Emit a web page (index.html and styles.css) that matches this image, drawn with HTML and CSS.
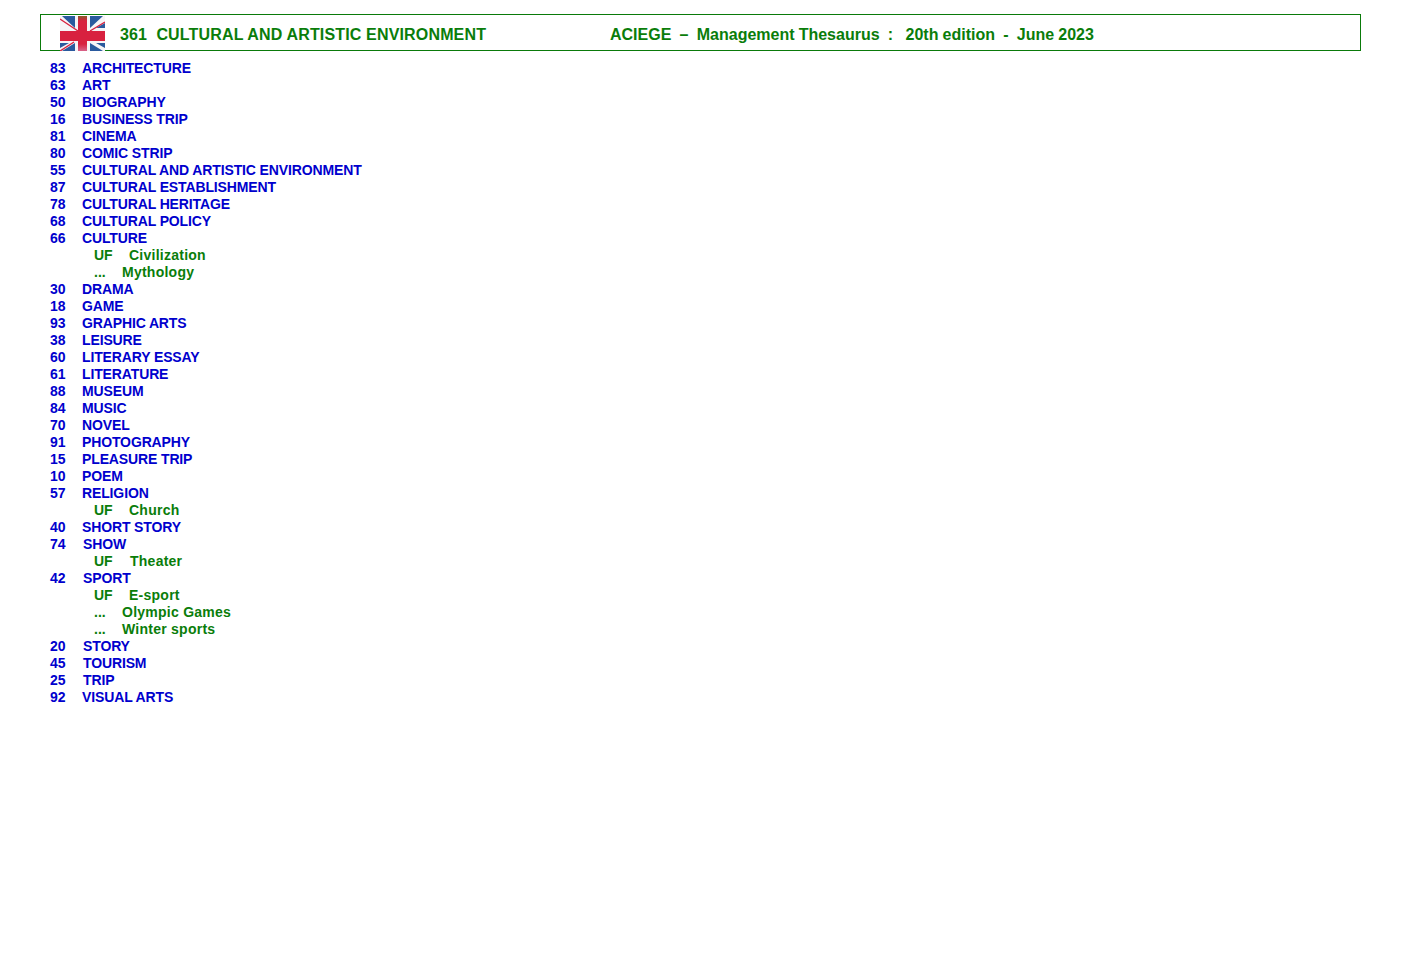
FILE: index.html
```html
<!DOCTYPE html>
<html lang="en">
<head>
<meta charset="utf-8">
<title>361 Cultural and artistic environment</title>
<link rel="stylesheet" href="styles.css">
</head>
<body>
<header class="banner">
  <svg class="flag" viewBox="0 0 45 36" width="45" height="36" aria-hidden="true">
    <defs>
      <linearGradient id="gloss" x1="0" y1="0" x2="0" y2="1">
        <stop offset="0" stop-color="#8a5a2a"/>
        <stop offset="0.14" stop-color="#d8213f"/>
        <stop offset="0.8" stop-color="#d8213f"/>
        <stop offset="1" stop-color="#d8648a"/>
      </linearGradient>
    </defs>
    <rect width="45" height="35" y="1" fill="#f6f4f6"/>
    <path d="M15 13V1H2ZM30 13V1H43ZM36 13H45V8ZM15 28V36H2ZM9 28H0V33ZM30 28V36H43ZM36 28H45V33Z" fill="#2a5a9e"/>
    <path d="M0 4 18 16M0 36 14 27M45 7 30 16" stroke="#d8213f" stroke-width="1.400"/>
    <rect x="18" y="1" width="9" height="35" fill="url(#gloss)"/>
    <rect y="16" width="45" height="10" fill="#d8213f"/>
  </svg>
  <span class="title">361&nbsp; CULTURAL AND ARTISTIC ENVIRONMENT</span>
  <span class="edition">ACIEGE &nbsp;–&nbsp; Management Thesaurus &nbsp;:&nbsp;&nbsp; 20th edition &nbsp;-&nbsp; June 2023</span>
</header>
<main class="list">
  <div class="term"><span class="num">83</span><span>ARCHITECTURE</span></div>
  <div class="term"><span class="num">63</span><span>ART</span></div>
  <div class="term"><span class="num">50</span><span>BIOGRAPHY</span></div>
  <div class="term"><span class="num">16</span><span>BUSINESS TRIP</span></div>
  <div class="term"><span class="num">81</span><span>CINEMA</span></div>
  <div class="term"><span class="num">80</span><span>COMIC STRIP</span></div>
  <div class="term"><span class="num">55</span><span>CULTURAL AND ARTISTIC ENVIRONMENT</span></div>
  <div class="term"><span class="num">87</span><span>CULTURAL ESTABLISHMENT</span></div>
  <div class="term"><span class="num">78</span><span>CULTURAL HERITAGE</span></div>
  <div class="term"><span class="num">68</span><span>CULTURAL POLICY</span></div>
  <div class="term"><span class="num">66</span><span>CULTURE</span></div>
  <div class="note"><span class="uf">UF</span><span>Civilization</span></div>
  <div class="note"><span class="dots">...</span><span>Mythology</span></div>
  <div class="term"><span class="num">30</span><span>DRAMA</span></div>
  <div class="term"><span class="num">18</span><span>GAME</span></div>
  <div class="term"><span class="num">93</span><span>GRAPHIC ARTS</span></div>
  <div class="term"><span class="num">38</span><span>LEISURE</span></div>
  <div class="term"><span class="num">60</span><span>LITERARY ESSAY</span></div>
  <div class="term"><span class="num">61</span><span>LITERATURE</span></div>
  <div class="term"><span class="num">88</span><span>MUSEUM</span></div>
  <div class="term"><span class="num">84</span><span>MUSIC</span></div>
  <div class="term"><span class="num">70</span><span>NOVEL</span></div>
  <div class="term"><span class="num">91</span><span>PHOTOGRAPHY</span></div>
  <div class="term"><span class="num">15</span><span>PLEASURE TRIP</span></div>
  <div class="term"><span class="num">10</span><span>POEM</span></div>
  <div class="term"><span class="num">57</span><span>RELIGION</span></div>
  <div class="note"><span class="uf">UF</span><span>Church</span></div>
  <div class="term"><span class="num">40</span><span>SHORT STORY</span></div>
  <div class="term wide"><span class="num">74</span><span>SHOW</span></div>
  <div class="note"><span class="uf wide-uf">UF</span><span>Theater</span></div>
  <div class="term wide"><span class="num">42</span><span>SPORT</span></div>
  <div class="note"><span class="uf">UF</span><span>E-sport</span></div>
  <div class="note"><span class="dots">...</span><span>Olympic Games</span></div>
  <div class="note"><span class="dots">...</span><span>Winter sports</span></div>
  <div class="term wide"><span class="num">20</span><span>STORY</span></div>
  <div class="term wide"><span class="num">45</span><span>TOURISM</span></div>
  <div class="term wide"><span class="num">25</span><span>TRIP</span></div>
  <div class="term"><span class="num">92</span><span>VISUAL ARTS</span></div>
</main>
</body>
</html>
```
FILE: styles.css
```css
html, body { background: #fff; }
body {
  margin: 0;
  padding: 14px 49px 0 40px;
  font-family: "Liberation Sans", Arial, sans-serif;
  font-weight: 700;
}
.banner {
  display: flex;
  align-items: center;
  height: 35px;
  padding-left: 19px;
  border: 1px solid #0a7a0a;
  color: #0a7d0a;
  font-size: 16px;
  white-space: pre;
}
.flag { flex: none; margin-right: 15px; margin-top: -1px; margin-bottom: -1px; }
.title { width: 490px; flex: none; padding-top: 5px; letter-spacing: 0.16px; }
.edition { padding-top: 5px; word-spacing: -0.32px; }
.list { padding: 9px 0 0 10px; font-size: 14px; line-height: 17px; }
.term { display: flex; color: #0000cd; letter-spacing: -0.13px; }
.num { width: 32px; flex: none; letter-spacing: 0; }
.wide .num { width: 33px; }
.note { display: flex; padding-left: 44px; color: #0a7d0a; letter-spacing: 0.25px; }
.uf { width: 35px; flex: none; letter-spacing: 0; }
.wide-uf { width: 36px; }
.dots { width: 28px; flex: none; letter-spacing: 0; }
```
